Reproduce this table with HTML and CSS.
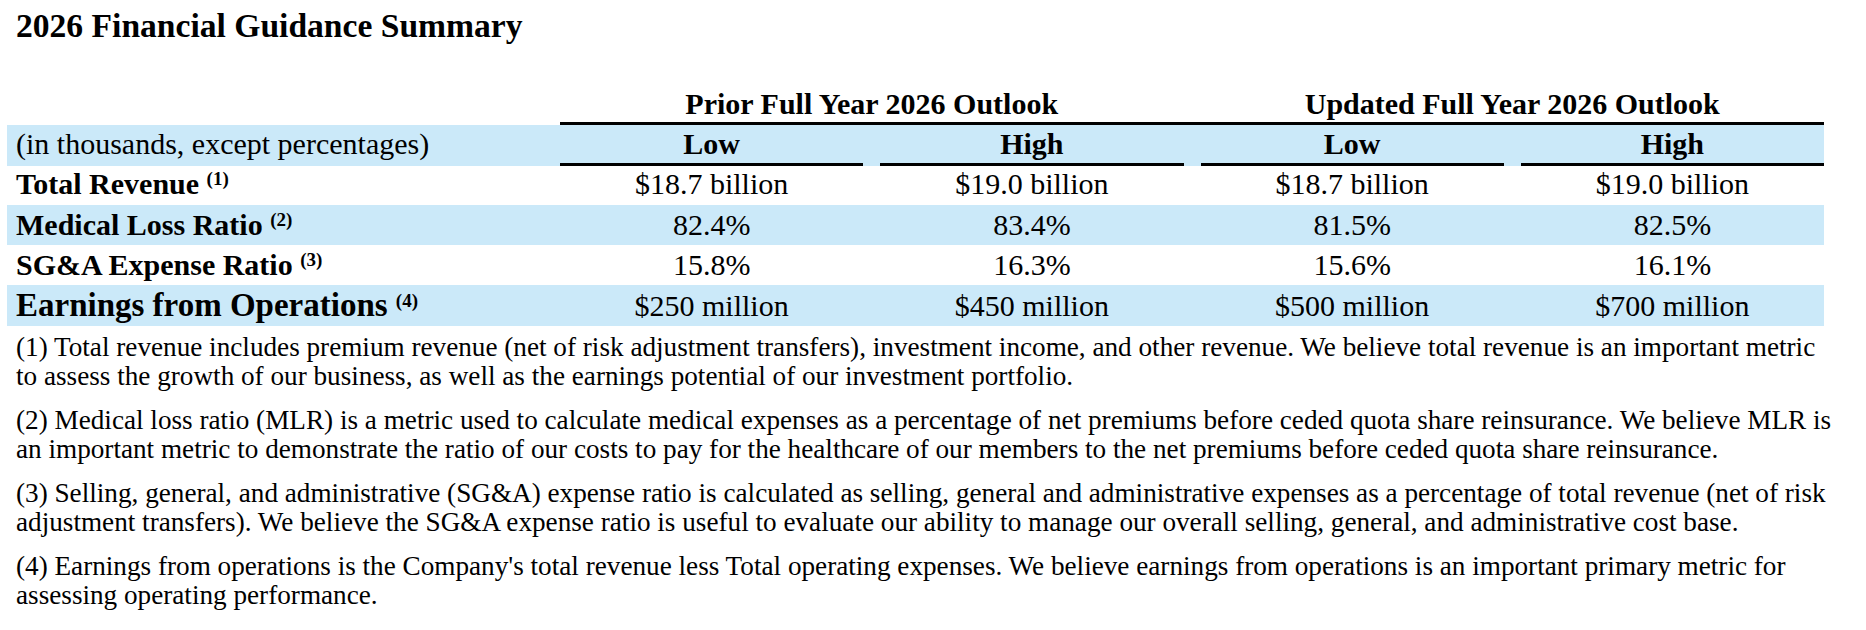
FILE: index.html
```html
<!DOCTYPE html>
<html lang="en">
<head>
  <meta charset="UTF-8"/>
  <meta name="viewport" content="width=device-width, initial-scale=1.0"/>
  <title>2026 Financial Guidance Summary</title>
  <link rel="stylesheet" href="styles.css">
</head>
<body>
  <div class="page">
    <h1 class="title">2026 Financial Guidance Summary</h1>

    <div class="guidance">
      <div class="grid-row group-row">
        <div></div>
        <div class="group">Prior Full Year 2026 Outlook</div>
        <div class="group">Updated Full Year 2026 Outlook</div>
      </div>
      <div class="grid-row head-row shaded">
        <div class="label">(in thousands, except percentages)</div>
        <div class="col-head">Low</div>
        <div class="col-head">High</div>
        <div class="col-head">Low</div>
        <div class="col-head">High</div>
      </div>
      <div class="grid-row row-first">
        <div class="label metric">Total Revenue <sup>(1)</sup></div>
        <div>$18.7 billion</div>
        <div>$19.0 billion</div>
        <div>$18.7 billion</div>
        <div>$19.0 billion</div>
      </div>
      <div class="grid-row shaded">
        <div class="label metric">Medical Loss Ratio <sup>(2)</sup></div>
        <div>82.4%</div>
        <div>83.4%</div>
        <div>81.5%</div>
        <div>82.5%</div>
      </div>
      <div class="grid-row">
        <div class="label metric">SG&amp;A Expense Ratio <sup>(3)</sup></div>
        <div>15.8%</div>
        <div>16.3%</div>
        <div>15.6%</div>
        <div>16.1%</div>
      </div>
      <div class="grid-row shaded row-lg">
        <div class="label metric metric-lg">Earnings from Operations <sup>(4)</sup></div>
        <div>$250 million</div>
        <div>$450 million</div>
        <div>$500 million</div>
        <div>$700 million</div>
      </div>
    </div>

    <div class="notes">
      <p>(1) Total revenue includes premium revenue (net of risk adjustment transfers), investment income, and other revenue. We believe total revenue is an important metric to assess the growth of our business, as well as the earnings potential of our investment portfolio.</p>
      <p>(2) Medical loss ratio (MLR) is a metric used to calculate medical expenses as a percentage of net premiums before ceded quota share reinsurance. We believe MLR is an important metric to demonstrate the ratio of our costs to pay for the healthcare of our members to the net premiums before ceded quota share reinsurance.</p>
      <p>(3) Selling, general, and administrative (SG&amp;A) expense ratio is calculated as selling, general and administrative expenses as a percentage of total revenue (net of risk adjustment transfers). We believe the SG&amp;A expense ratio is useful to evaluate our ability to manage our overall selling, general, and administrative cost base.</p>
      <p>(4) Earnings from operations is the Company's total revenue less Total operating expenses. We believe earnings from operations is an important primary metric for assessing operating performance.</p>
    </div>
  </div>
</body>
</html>
```

FILE: styles.css
```css
/* Tokens */
:root {
  --shade: #cbe9f9;
  --ink: #000;
  --rule: 3px;
  --font-stack: "Liberation Serif", "Times New Roman", serif;
}
*, *::before, *::after { box-sizing: border-box; }
body {
  margin: 0;
  font-family: var(--font-stack);
  color: var(--ink);
  background: #fff;
}
.page { padding: 7px 0 0 7px; }

.title {
  margin: 0 0 41px; padding-left: 9px;
  font-size: 33.6px; line-height: 38px; font-weight: bold;
}

/* Guidance table */
.grid-row {
  display: grid;
  grid-template-columns: 536px repeat(4, 1fr);
  column-gap: 17px;
  width: 1817px;
  font-size: 30px; line-height: 40px;
  text-align: center;
}
.shaded { background: var(--shade); }
.label { text-align: left; padding-left: 9px; white-space: nowrap; }
.metric { font-weight: bold; }
.metric-lg { font-size: 33px; }
.row-first { line-height: 36px; padding-bottom: 3px; }
.row-lg { line-height: 41px; }

.group-row { line-height: 36px; }
.group { grid-column: span 2; font-weight: bold; }
.group-row::after {
  content: ''; grid-column: 2 / -1;
  height: var(--rule); background: var(--ink);
}

.head-row { line-height: 38px; }
.col-head { font-weight: bold; border-bottom: var(--rule) solid var(--ink); }

sup {
  font-size: 19px; line-height: 0;
  vertical-align: 9px;
}

/* Footnotes */
.notes {
  width: 1831px; margin-top: 7px; padding-left: 9px;
  font-size: 27.2px; line-height: 28.5px;
}
.notes p { margin: 0 0 16px; }
```
